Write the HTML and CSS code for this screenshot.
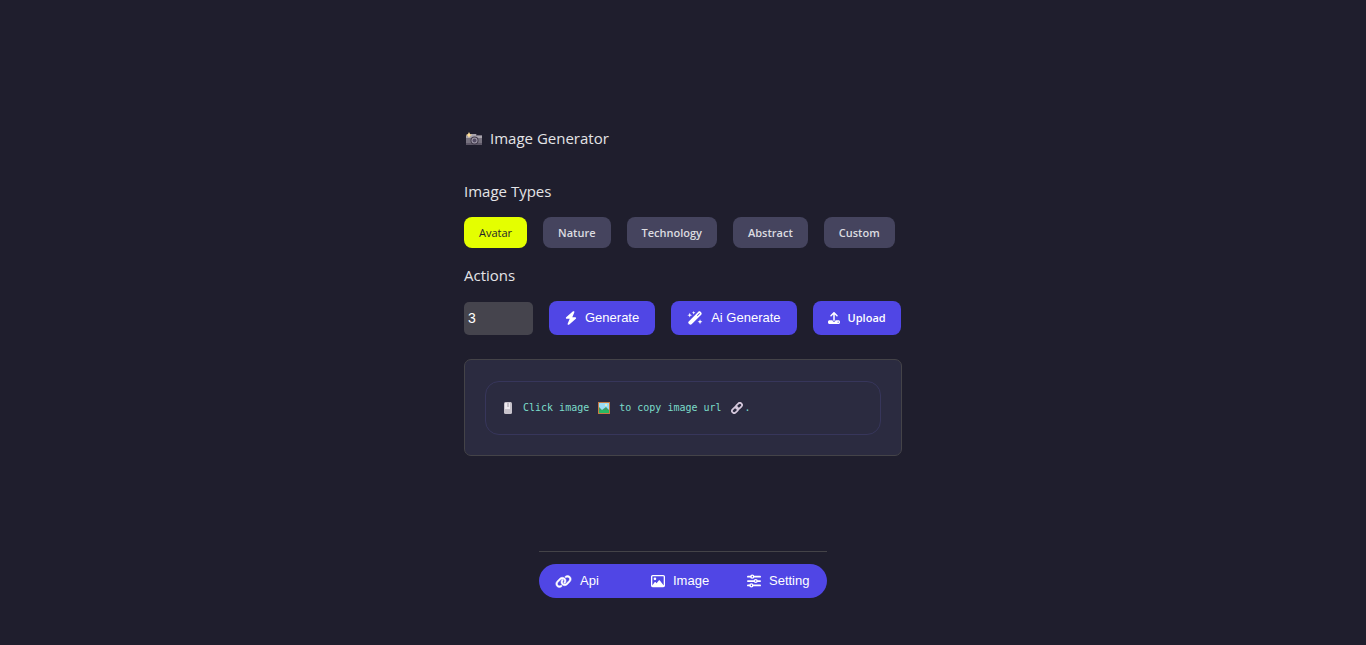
FILE: index.html
```html
<!DOCTYPE html>
<html lang="en">
<head>
<meta charset="utf-8">
<meta name="viewport" content="width=device-width, initial-scale=1">
<title>Image Generator</title>
<link rel="stylesheet" href="styles.css">
</head>
<body>
<main class="panel">
  <h1 class="title">
    <svg class="camera" viewBox="0 0 18 14" aria-hidden="true"><path fill="#77727f" d="M1 3h4l1-1h5l1 1h5v10H1z"/><path fill="#a9a4ad" d="M1 4h16v2H1zM6 2h5v2H6z"/><path fill="#5c5666" d="M1 11h16v2H1z"/><circle cx="9.500" cy="8.500" r="4" fill="#403a4a"/><circle cx="9.500" cy="8.500" r="3" fill="#a29cab"/><circle cx="9.500" cy="8.500" r="2" fill="#544d64"/><path fill="#ffe09a" d="m4 0 1 2 2 1-2 1-1 2-1-2-2-1 2-1z"/></svg>
    Image Generator
  </h1>
  <section class="section">
    <h2 class="heading">Image Types</h2>
    <div class="row">
      <button class="chip chip-active" type="button">Avatar</button>
      <button class="chip" type="button">Nature</button>
      <button class="chip" type="button">Technology</button>
      <button class="chip" type="button">Abstract</button>
      <button class="chip" type="button">Custom</button>
    </div>
  </section>
  <section class="section">
    <h2 class="heading">Actions</h2>
    <div class="row">
      <input class="count" type="text" inputmode="numeric" value="3" aria-label="Number of images">
      <button class="button" type="button"><svg class="icon-bolt" viewBox="0 0 448 512" aria-hidden="true"><path d="M349.400 44.600c5.900-13.700 1.500-29.700-10.600-38.500s-28.600-8-39.900 1.800l-256 224c-10 8.800-13.600 22.900-8.900 35.300S50.700 288 64 288h111.500L98.600 467.400c-5.900 13.700-1.500 29.700 10.600 38.500s28.600 8 39.900-1.800l256-224c10-8.800 13.600-22.900 8.900-35.300s-16.600-20.700-30-20.700H272.500z"/></svg>Generate</button>
      <button class="button" type="button"><svg class="icon-wand" viewBox="0 0 576 512" aria-hidden="true"><path fill-rule="evenodd" d="M410 28 58 380c-22 22-22 58 0 80l26 26c22 22 58 22 80 0l352-352c22-22 22-58 0-80l-26-26c-22-22-58-22-80 0zm38 48 20 20-90 90-20-20z"/><path d="m96 64 24 64 64 24-64 24-24 64-24-64-64-24 64-24zM240 0l18 46 46 18-46 18-18 46-18-46-46-18 46-18zM472 304l24 64 64 24-64 24-24 64-24-64-64-24 64-24z"/></svg>Ai Generate</button>
      <button class="button upload" type="button"><svg class="icon-upload" viewBox="0 0 512 512" aria-hidden="true"><path fill-rule="evenodd" d="M288 109.300V352c0 17.700-14.300 32-32 32s-32-14.300-32-32V109.300l-73.400 73.400c-12.500 12.500-32.800 12.500-45.300 0s-12.500-32.800 0-45.300l128-128c12.500-12.500 32.800-12.500 45.300 0l128 128c12.500 12.500 12.500 32.800 0 45.300s-32.800 12.500-45.300 0zM64 352h128c0 35.300 28.700 64 64 64s64-28.700 64-64h128c35.300 0 64 28.700 64 64v32c0 35.300-28.700 64-64 64H64c-35.300 0-64-28.700-64-64v-32c0-35.300 28.700-64 64-64zm368 104a24 24 0 1 0 0-48 24 24 0 1 0 0 48z"/></svg>Upload</button>
    </div>
  </section>
  <section class="output">
    <p class="hint">
      <svg class="mouse" viewBox="0 0 8 12" aria-hidden="true"><rect width="8" height="12" rx="1.500" fill="#c8c3cc"/><path fill="#eeeaf0" d="M1 1h5v6H1z"/><path fill="#9b96a1" d="M3.500 1h1v4h-1z"/></svg>
      <span>Click image</span>
      <svg class="picture" viewBox="0 0 12 12" aria-hidden="true"><path fill="#c97b43" d="M0 0h12v12H0z"/><path fill="#9bdcf5" d="M1 1h10v10H1z"/><circle cx="8" cy="3" r="1" fill="#fff1a8"/><path fill="#3e9c67" d="m1 5 3 3 4-3 3 3v3H1z"/><path fill="#27ba64" d="M1 9c4-2 7 0 10-1v3H1z"/></svg>
      <span>to copy image url</span>
      <span class="ending"><svg class="picture" viewBox="0 0 12 12" aria-hidden="true"><g fill="none" stroke="#d5c8dc" stroke-width="1.700"><rect x="4.400" y="1.800" width="7" height="4.400" rx="2.200" transform="rotate(-45 7.900 4)"/><rect x=".6" y="5.800" width="7" height="4.400" rx="2.200" transform="rotate(-45 4.100 8)"/></g></svg>.</span>
    </p>
  </section>
</main>
<footer class="footer">
  <nav class="nav" aria-label="Main">
    <button class="nav-item" type="button"><svg class="icon-link" viewBox="0 0 640 512" aria-hidden="true"><path stroke="currentColor" stroke-width="20" d="M579.800 267.700c56.500-56.500 56.500-148 0-204.500-50-50-128.800-56.500-186.300-15.400l-1.600 1.100c-14.400 10.300-17.700 30.300-7.400 44.600s30.300 17.700 44.600 7.400l1.600-1.100c32.100-22.900 76-19.300 103.800 8.600 31.500 31.500 31.500 82.500 0 114L422.300 334.800c-31.500 31.500-82.500 31.500-114 0-27.900-27.900-31.500-71.800-8.600-103.800l1.100-1.600c10.300-14.400 6.900-34.400-7.400-44.600s-34.400-6.900-44.600 7.400l-1.100 1.600C206.500 251.200 213 330 263 380c56.500 56.500 148 56.500 204.500 0zM60.200 244.300c-56.500 56.500-56.500 148 0 204.500 50 50 128.800 56.500 186.300 15.400l1.600-1.100c14.400-10.300 17.700-30.300 7.400-44.600s-30.300-17.700-44.600-7.400l-1.600 1.100c-32.100 22.900-76 19.300-103.800-8.600C74 372 74 321 105.500 289.500l112.200-112.300c31.500-31.500 82.500-31.500 114 0 27.900 27.900 31.500 71.800 8.600 103.900l-1.100 1.600c-10.300 14.400-6.900 34.400 7.400 44.600s34.400 6.900 44.600-7.400l1.100-1.600C433.500 260.800 427 182 377 132c-56.500-56.500-148-56.500-204.500 0z"/></svg>Api</button>
    <button class="nav-item" type="button"><svg class="icon-square" viewBox="0 0 512 512" aria-hidden="true"><path d="M448 80c8.800 0 16 7.200 16 16v319.800l-5-6.500-136-176c-4.500-5.900-11.600-9.300-19-9.300s-14.400 3.400-19 9.300l-83 107.400-30.500-42.700c-4.500-6.300-11.700-10-19.500-10s-15 3.700-19.500 10.100l-80 112-4.500 6.200V96c0-8.800 7.200-16 16-16zM64 32C28.700 32 0 60.700 0 96v320c0 35.300 28.700 64 64 64h384c35.300 0 64-28.700 64-64V96c0-35.300-28.700-64-64-64zm80 192a48 48 0 1 0 0-96 48 48 0 1 0 0 96z"/></svg>Image</button>
    <button class="nav-item" type="button"><svg class="icon-square" viewBox="0 0 512 512" aria-hidden="true"><path fill="none" stroke="currentColor" stroke-width="64" stroke-linecap="round" d="M32 96h105M247 96h233M32 256h233M375 256h105M32 416h73M215 416h265"/><g fill="none" stroke="currentColor" stroke-width="48"><circle cx="192" cy="96" r="52"/><circle cx="320" cy="256" r="52"/><circle cx="160" cy="416" r="52"/></g></svg>Setting</button>
  </nav>
</footer>
</body>
</html>
```
FILE: styles.css
```css
* { box-sizing: border-box; }

body {
  display: flex;
  flex-direction: column;
  align-items: center;
  gap: 95px;
  min-height: 100vh;
  margin: 0;
  padding: 127px 16px 40px;
  background: #1f1e2d;
  color: #e4e4e7;
  font-family: "Open Sans", "Noto Sans", sans-serif;
}

button, input {
  margin: 0;
  border: 0;
  font: 13px/18px "Liberation Sans", Arial, sans-serif;
}

button { cursor: pointer; }

svg { display: block; flex: none; fill: currentColor; }

.panel { width: 100%; max-width: 438px; }

.title, .heading {
  margin: 0;
  font-size: 15px;
  font-weight: 400;
  line-height: 22px;
}

.title {
  display: flex;
  align-items: center;
  gap: 7px;
  margin-bottom: 31px;
  padding-left: 1px;
}

.camera { width: 18px; height: 14px; margin-top: 2px; }

.section { margin-bottom: 16px; }

.heading { margin-bottom: 15px; }

.row {
  display: flex;
  flex-wrap: wrap;
  align-items: center;
  gap: 16px;
}

.chip {
  padding: 8px 15px;
  border-radius: 8px;
  background: #45445e;
  color: #dcdce0;
  font: 600 11px/15px "Open Sans", sans-serif;
}

.chip-active {
  background: #e4ff00;
  color: #1f1e2d;
  font-weight: 500;
}

.count {
  width: 69px;
  height: 33px;
  padding: 0 4px;
  border-radius: 5px;
  background: #45444d;
  color: #fff;
  font-size: 14px;
}

.button, .nav-item {
  display: flex;
  align-items: center;
  gap: 8px;
  color: #fff;
}

.button {
  padding: 8px 16px;
  border-radius: 8px;
  background: #5046e5;
}

.upload {
  padding: 8px 15px;
  font: 600 11px/18px "Open Sans", sans-serif;
}

.icon-bolt { width: 12px; height: 14px; }
.icon-wand { width: 16px; height: 14px; }
.icon-upload { width: 12px; height: 12px; }
.icon-link { width: 17px; height: 13px; }
.icon-square { width: 14px; height: 14px; }

.output {
  margin-top: 24px;
  padding: 21px 20px 20px;
  border: 1px solid #444348;
  border-radius: 7px;
  background: #2b2b40;
}

.hint {
  display: flex;
  align-items: center;
  gap: 9px;
  margin: 0;
  padding: 18px;
  border: 1px solid #37365b;
  border-radius: 14px;
  color: #7bdcca;
  font: 10px/16px "DejaVu Sans Mono", monospace;
}

.mouse { width: 8px; height: 12px; margin-right: 2px; }
.picture { width: 12px; height: 12px; }
.ending { display: flex; align-items: center; gap: 2px; }

.footer {
  width: 100%;
  max-width: 288px;
  padding-top: 12px;
  border-top: 1px solid #444348;
}

.nav {
  display: grid;
  grid-template-columns: repeat(3, 1fr);
  border-radius: 17px;
  background: #5046e5;
}

.nav-item {
  padding: 8px 0 8px 16px;
  background: transparent;
}
```
